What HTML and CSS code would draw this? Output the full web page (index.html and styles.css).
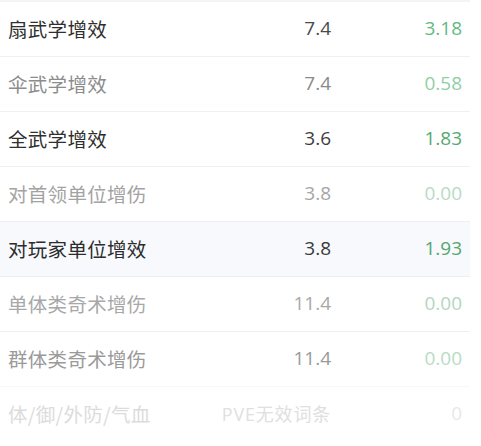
FILE: index.html
```html
<!DOCTYPE html>
<html lang="zh-CN">
<head>
<meta charset="utf-8">
<link rel="stylesheet" href="styles.css">
</head>
<body>
<div class="table">
  <div class="row r1"><span class="label">扇武学增效</span><span class="num">7.4</span><span class="val">3.18</span></div>
  <div class="row r2"><span class="label">伞武学增效</span><span class="num">7.4</span><span class="val">0.58</span></div>
  <div class="row r3"><span class="label">全武学增效</span><span class="num">3.6</span><span class="val">1.83</span></div>
  <div class="row r4"><span class="label">对首领单位增伤</span><span class="num">3.8</span><span class="val">0.00</span></div>
  <div class="row r5 hl"><span class="label">对玩家单位增效</span><span class="num">3.8</span><span class="val">1.93</span></div>
  <div class="row r6"><span class="label">单体类奇术增伤</span><span class="num">11.4</span><span class="val">0.00</span></div>
  <div class="row r7"><span class="label">群体类奇术增伤</span><span class="num">11.4</span><span class="val">0.00</span></div>
  <div class="row r8"><span class="label">体/御/外防/气血</span><span class="num">PVE无效词条</span><span class="val">0</span></div>
</div>
</body>
</html>
```
FILE: styles.css
```css
html, body {
  margin: 0;
  padding: 0;
  background: #ffffff;
}
body {
  font-family: "Noto Sans CJK SC", "Noto Sans", sans-serif;
}
.table {
  width: 470px;
  border-top: 2px solid #f3f4f6;
}
.row {
  display: grid;
  grid-template-columns: 1fr 120px 131px;
  align-items: center;
  height: 52px;
  padding: 0 8px 2px;
  border-bottom: 1px solid #eef0f3;
}
.hl {
  background: #f7f9fc;
}
.label {
  font-size: 19.5px;
  letter-spacing: 0.3px;
  white-space: nowrap;
}
.num, .val {
  text-align: right;
  font-family: "Open Sans", "Noto Sans CJK SC", sans-serif;
  font-size: 19px;
  white-space: nowrap;
}
.r8 .num {
  font-size: 18px;
  letter-spacing: 0.8px;
}
.r1 .label { color: #2f2f2f; }
.r1 .num { color: #4a4a4a; }
.r1 .val { color: #62b985; }
.r2 .label { color: #8c8c8c; }
.r2 .num { color: #8a8a8a; }
.r2 .val { color: #8fcfa7; }
.r3 .label { color: #2f2f2f; }
.r3 .num { color: #3d3d3d; }
.r3 .val { color: #56a873; }
.r4 .label { color: #a3a3a3; }
.r4 .num { color: #a6a6a6; }
.r4 .val { color: #b7dbc4; }
.r5 .label { color: #2c2c2c; }
.r5 .num { color: #3a3a3a; }
.r5 .val { color: #55a571; }
.r6 .label { color: #a8a8a8; }
.r6 .num { color: #a8a8a8; }
.r6 .val { color: #b4d6c0; }
.r7 .label { color: #9a9a9a; }
.r7 .num { color: #9a9a9a; }
.r7 .val { color: #b7dcc4; }
.r7 { border-bottom-color: #f6f7f8; }
.r8 { border-bottom-color: transparent; }
.r8 .label { color: #dcdcdc; }
.r8 .num { color: #e0e0e0; }
.r8 .val { color: #e6e9e7; }
```
